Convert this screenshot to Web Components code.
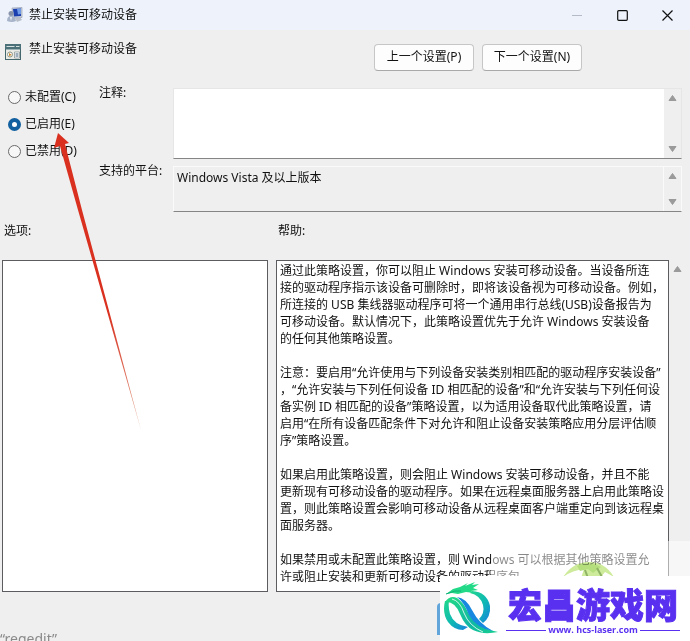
<!DOCTYPE html>
<html lang="zh-CN">
<head>
<meta charset="utf-8">
<title>禁止安装可移动设备</title>
<style>
  body {
    margin: 0;
    font-family: "Noto Sans", "Noto Sans CJK SC", sans-serif;
    font-size: 12px;
    line-height: 17px;
    color: #111;
    background: #efefef;
  }
</style>
</head>
<body>
<policy-window></policy-window>

<script>
class TitleBar extends HTMLElement {
  constructor() {
    super();
    this.attachShadow({ mode: 'open' });
    this.shadowRoot.innerHTML = `
      <style>
        :host {
          display: flex;
          align-items: center;
          flex: none;
          height: 30px;
          padding-left: 7px;
          background: #edf2fb;
        }

        .icon {
          width: 16px;
          height: 16px;
          margin-right: 6px;
        }

        .title {
          flex: 1;
          padding-bottom: 2px;
        }

        button {
          display: flex;
          align-items: center;
          justify-content: center;
          width: 45px;
          height: 28px;
          padding: 0;
          border: 0;
          background: none;
        }
      </style>
      <svg class="icon" viewBox="0 0 16 16">
        <path d="M5 1l10-.5v10L6 11z" fill="#c9cfdb" stroke="#8d97ad" stroke-width=".6"/>
        <path d="M6 2l8-.5V9L7 9.500z" fill="#1b3fae"/>
        <path d="M10 2l4-.5V7l-3 .5z" fill="#6f9ae8"/>
        <path d="M8 11l5-1 2 3-5 2z" fill="#b9bfca"/>
        <circle cx="4" cy="6.500" r="2.500" fill="#8792a8"/>
        <path d="M0 14q0-5 4-5t5 5q-4 2-9 0z" fill="#a7b3c8"/>
        <path d="M3 10l2 0-1 4z" fill="#eef2f8"/>
      </svg>
      <span class="title"><slot></slot></span>
      <button aria-label="最小化" disabled>
        <svg width="11" height="11"><path d="M0 5.500h10" stroke="#b4bac6"/></svg>
      </button>
      <button aria-label="最大化">
        <svg width="11" height="11"><rect x=".7" y=".7" width="9.600" height="9.600" rx="1" fill="none" stroke="#111" stroke-width="1.200"/></svg>
      </button>
      <button aria-label="关闭">
        <svg width="11" height="11"><path d="M.5.5l10 10M10.500.5l-10 10" stroke="#111" stroke-width="1.200"/></svg>
      </button>
    `;
  }
}

customElements.define('title-bar', TitleBar);

class SettingHeader extends HTMLElement {
  constructor() {
    super();
    this.attachShadow({ mode: 'open' });
    this.shadowRoot.innerHTML = `
      <style>
        :host {
          display: flex;
          align-items: flex-start;
          flex: none;
          box-sizing: border-box;
          height: 43px;
          padding: 14px 5px 0;
        }

        svg {
          flex: none;
          width: 16px;
          height: 16px;
          margin-right: 8px;
        }

        .name {
          flex: 1;
          margin-top: -4px;
        }

        nav {
          display: flex;
          flex: 0 0 311px;
          gap: 8px;
        }
      </style>
      <svg viewBox="0 0 16 16">
        <rect x=".5" y=".5" width="15" height="15" fill="#e9ebe4" stroke="#44676d"/>
        <path d="M0 0h16v5H0z" fill="#4c7077"/>
        <path d="M1.500 2.500h8M11 2.500h3.500" stroke="#d5e0df"/>
        <path d="M1 5.500h14" stroke="#9eb3b5"/>
        <circle cx="5" cy="10.500" r="2.500" fill="#fff" stroke="#8a9385"/>
        <path d="M4 9l3 2-3 1z" fill="#c8862f"/>
        <path d="M9.500 8h5v6h-5z" fill="#fff" stroke="#7f8c8c" stroke-width=".7"/>
        <path d="M10.500 10h3M10.500 12h3" stroke="#3b5d75"/>
      </svg>
      <span class="name"><slot></slot></span>
      <nav>
        <push-button>上一个设置(P)</push-button>
        <push-button>下一个设置(N)</push-button>
      </nav>
    `;
  }
}

customElements.define('setting-header', SettingHeader);

class PushButton extends HTMLElement {
  constructor() {
    super();
    this.attachShadow({ mode: 'open' });
    this.shadowRoot.innerHTML = `
      <style>
        :host {
          display: block;
        }

        button {
          width: 100px;
          height: 27px;
          padding: 0 0 2px;
          border: 1px solid #c6c6c6;
          border-bottom-color: #a9a9a9;
          border-radius: 4px;
          background: #fdfdfd;
          color: inherit;
          font: inherit;
          white-space: nowrap;
        }
      </style>
      <button><slot></slot></button>
    `;
  }
}

customElements.define('push-button', PushButton);

class StateOptions extends HTMLElement {
  constructor() {
    super();
    this.attachShadow({ mode: 'open' });
    this.shadowRoot.innerHTML = `
      <style>
        :host {
          display: block;
        }

        label {
          display: flex;
          align-items: center;
          gap: 4px;
          height: 27px;
        }

        input {
          appearance: none;
          box-sizing: border-box;
          width: 13px;
          height: 13px;
          margin: 1px 0 0;
          border: 1px solid #6a6a6a;
          border-radius: 50%;
          background: #f7f7f7;
        }

        input:checked {
          border: 4px solid #12609f;
          background: #fff;
        }
      </style>
    `;
  }

  connectedCallback() {
    const states = JSON.parse(this.getAttribute('states'));
    states.forEach(state => {
      const label = document.createElement('label');
      const input = document.createElement('input');
      input.type = 'radio';
      input.name = 'state';
      input.checked = state === this.getAttribute('selected');
      label.append(input, state);
      this.shadowRoot.appendChild(label);
    });
  }
}

customElements.define('state-options', StateOptions);

class ScrollArrows extends HTMLElement {
  constructor() {
    super();
    this.attachShadow({ mode: 'open' });
    this.shadowRoot.innerHTML = `
      <style>
        :host {
          display: flex;
          flex-direction: column;
          justify-content: space-between;
          flex: 0 0 17px;
          background: #efefef;
        }

        button {
          display: flex;
          align-items: center;
          justify-content: center;
          height: 18px;
          padding: 0;
          border: 0;
          background: none;
        }

        path {
          fill: #9a9a9a;
          stroke: #9a9a9a;
          stroke-linejoin: round;
        }
      </style>
      <button aria-label="向上滚动"><svg width="9" height="8"><path d="M4.500 1.500L8 6.500H1z"/></svg></button>
      <button aria-label="向下滚动"><svg width="9" height="8"><path d="M4.500 6.500L8 1.500H1z"/></svg></button>
    `;
  }
}

customElements.define('scroll-arrows', ScrollArrows);

class TextField extends HTMLElement {
  constructor() {
    super();
    this.attachShadow({ mode: 'open' });
    this.shadowRoot.innerHTML = `
      <style>
        :host {
          display: flex;
        }

        label {
          flex: 0 0 74px;
          margin-top: -4px;
          white-space: nowrap;
        }

        .box {
          display: flex;
          flex: 1;
          box-sizing: border-box;
          border: 1px solid #e6e6e6;
          border-bottom-color: #858585;
          background: #fff;
        }

        textarea {
          flex: 1;
          min-width: 0;
          padding: 2px 3px;
          border: 0;
          outline: 0;
          resize: none;
          overflow: hidden;
          background: none;
          color: inherit;
          font: inherit;
        }

        :host([readonly]) .box {
          border-color: #fafafa #fafafa #858585;
          background: #efefef;
        }

        :host([readonly]) scroll-arrows {
          border-left: 1px solid #fafafa;
        }
      </style>
      <label for="text"></label>
      <div class="box">
        <textarea id="text" rows="1"></textarea>
        <scroll-arrows></scroll-arrows>
      </div>
    `;
  }

  connectedCallback() {
    const text = this.shadowRoot.querySelector('textarea');
    this.shadowRoot.querySelector('label').textContent = this.getAttribute('label');
    text.value = this.getAttribute('value') || '';
    text.readOnly = this.hasAttribute('readonly');
  }
}

customElements.define('text-field', TextField);

class PaneBox extends HTMLElement {
  constructor() {
    super();
    this.attachShadow({ mode: 'open' });
    this.shadowRoot.innerHTML = `
      <style>
        :host {
          display: flex;
          flex-direction: column;
          min-width: 0;
          min-height: 0;
        }

        .caption {
          height: 38px;
          padding-left: 2px;
        }

        .content {
          flex: 1;
          box-sizing: border-box;
          min-height: 0;
          padding: 1px 3px 0;
          overflow: hidden;
          border: 1px solid #5c5c60;
          background: #fff;
          white-space: nowrap;
        }
      </style>
      <div class="caption"><slot name="caption"></slot></div>
      <div class="content"><slot></slot></div>
    `;
  }
}

customElements.define('pane-box', PaneBox);

class RedArrow extends HTMLElement {
  constructor() {
    super();
    this.attachShadow({ mode: 'open' });
    this.shadowRoot.innerHTML = `
      <style>
        :host {
          position: absolute;
          left: 50px;
          top: 130px;
          pointer-events: none;
        }

        svg {
          display: block;
        }
      </style>
      <svg width="96" height="306">
        <defs>
          <linearGradient id="fade" x1="0" y1="0" x2="0" y2="1">
            <stop offset=".6" stop-color="#d9301f"/>
            <stop offset="1" stop-color="#e2a48c"/>
          </linearGradient>
        </defs>
        <path d="M8 3L19 13 15 14 32 80 91 300 28 80 10 16 4 18z" fill="url(#fade)"/>
      </svg>
    `;
  }
}

customElements.define('red-arrow', RedArrow);

class SiteBadge extends HTMLElement {
  constructor() {
    super();
    this.attachShadow({ mode: 'open' });
    this.shadowRoot.innerHTML = `
      <style>
        :host {
          position: absolute;
          right: 0;
          bottom: 0;
          width: 253px;
          height: 100px;
          pointer-events: none;
        }

        .haze {
          position: absolute;
          right: 0;
          bottom: 0;
          width: 199px;
          height: 100px;
          background: rgba(255, 255, 255, .5);
        }

        .leaf {
          position: absolute;
          left: 124px;
          top: 18px;
          mix-blend-mode: multiply;
        }

        .edge {
          position: absolute;
          left: 0;
          bottom: 6px;
          width: 8px;
          height: 32px;
          border-radius: 4px 0 0 0;
          background: #62a5da;
        }

        .card {
          position: absolute;
          right: 0;
          bottom: 0;
          display: flex;
          gap: 7px;
          box-sizing: border-box;
          width: 250px;
          height: 65px;
          padding: 5px 10px 0 3px;
          background: #fff;
          color: #5a30f0;
        }

        .text {
          flex: 1;
          padding-top: 6px;
        }

        .name {
          font: 900 34px/38px Roboto, "Noto Sans CJK SC", sans-serif;
          text-align: center;
          white-space: nowrap;
          -webkit-text-stroke: 1px #5a30f0;
        }

        .site {
          display: flex;
          align-items: center;
          gap: 2px;
          font: 700 9px/10px "Open Sans", sans-serif;
          white-space: nowrap;
        }

        .site::before,
        .site::after {
          content: "";
          flex: 1;
          height: 1px;
          background: #5a30f0;
        }
      </style>
      <div class="haze"></div>
      <svg class="leaf" width="56" height="20">
        <path d="M2 18Q12 3 28 3q16 0 25 15l-9-5-5 6H20l3-9q-11 1-21 8z" fill="#cdeb9b"/>
        <path d="M16 7q10-6 24 1l-8 6-5-4-8 2z" fill="#b5de7d"/>
        <path d="M24 11l3 8M36 9l5 9" stroke="#8fb364" stroke-width="2"/>
      </svg>
      <div class="edge"></div>
      <div class="card">
        <svg width="56" height="54" viewBox="0 0 56 54">
          <defs>
            <linearGradient id="ring" x1="0" y1="0" x2="1" y2="1">
              <stop offset="0" stop-color="#20d68c"/>
              <stop offset=".55" stop-color="#0fb7b5"/>
              <stop offset="1" stop-color="#167fe0"/>
            </linearGradient>
            <linearGradient id="tail" x1="0" y1="0" x2="1" y2="1">
              <stop offset="0" stop-color="#25dc84"/>
              <stop offset=".6" stop-color="#10b7a5"/>
              <stop offset="1" stop-color="#16cf8e"/>
            </linearGradient>
          </defs>
          <!-- dragon head and mane -->
          <path d="M3 13L10 8 17 6 25 2 22 5 32 1 29 4 36 3 30 7 35 9 28 10 31 12 23 11 15 13 9 12z" fill="#22d987"/>
          <path d="M3 13l9-3 6 0" fill="none" stroke="#0fae77" stroke-width="1"/>
          <!-- ring -->
          <path d="M29 10Q44 11 47 25 48 36 40 42L36 38Q42 32 40 24 37 14 27 12z" fill="url(#ring)"/>
          <path d="M2 20Q-1 32 5 41 11 49 20 49L25 46Q11 44 7 33 5 26 6 20z" fill="url(#ring)"/>
          <!-- ribbon -->
          <path d="M2 21Q7 14 14 17 20 21 25 31 33 47 55 51 40 54 30 49 22 45 17 33 12 20 2 21z" fill="url(#tail)"/>
          <path d="M14 16Q23 17 29 29 36 43 50 50 33 47 26 34 21 21 14 16z" fill="#1788df"/>
          <path d="M9 18Q17 20 21 32 26 45 40 51" fill="none" stroke="#fff" stroke-width=".8"/>
        </svg>
        <div class="text">
          <div class="name">宏昌游戏网</div>
          <div class="site">www. hcs-laser.com</div>
        </div>
      </div>
    `;
  }
}

customElements.define('site-badge', SiteBadge);

class PolicyWindow extends HTMLElement {
  constructor() {
    super();
    this.attachShadow({ mode: 'open' });
    this.shadowRoot.innerHTML = `
      <style>
        :host {
          position: relative;
          display: flex;
          flex-direction: column;
          height: 100vh;
          overflow: hidden;
        }

        .settings {
          display: grid;
          grid-template-columns: 91px 1fr;
          flex: none;
          padding: 15px 8px 0;
        }

        state-options {
          margin-top: -5px;
        }

        .fields {
          display: grid;
          grid-template-rows: 71px 46px;
          gap: 7px;
        }

        .panes {
          display: grid;
          grid-template-columns: 266fr 393fr 9px;
          grid-template-rows: minmax(0, 1fr);
          column-gap: 8px;
          flex: 1;
          min-height: 0;
          padding: 10px 4px 0 2px;
        }

        .gutter {
          margin: 38px 0 0 -8px;
        }

        .gutter scroll-arrows {
          height: 100%;
        }

        p {
          margin: 0 0 17px;
        }

        footer {
          flex: none;
          box-sizing: border-box;
          height: 49px;
          padding-top: 38px;
          overflow: hidden;
          color: #8a8a8a;
          font-size: 14px;
        }
      </style>
      <title-bar>禁止安装可移动设备</title-bar>
      <setting-header>禁止安装可移动设备</setting-header>
      <div class="settings">
        <state-options states='["未配置(C)", "已启用(E)", "已禁用(D)"]' selected="已启用(E)"></state-options>
        <div class="fields">
          <text-field label="注释:"></text-field>
          <text-field label="支持的平台:" value="Windows Vista 及以上版本" readonly></text-field>
        </div>
      </div>
      <div class="panes">
        <pane-box><span slot="caption">选项:</span></pane-box>
        <pane-box>
          <span slot="caption">帮助:</span>
          <p>通过此策略设置，你可以阻止 Windows 安装可移动设备。当设备所连<br>接的驱动程序指示该设备可删除时，即将该设备视为可移动设备。例如，<br>所连接的 USB 集线器驱动程序可将一个通用串行总线(USB)设备报告为<br>可移动设备。默认情况下，此策略设置优先于允许 Windows 安装设备<br>的任何其他策略设置。</p>
          <p>注意：要启用“允许使用与下列设备安装类别相匹配的驱动程序安装设备”<br>，“允许安装与下列任何设备 ID 相匹配的设备”和“允许安装与下列任何设<br>备实例 ID 相匹配的设备”策略设置，以为适用设备取代此策略设置，请<br>启用“在所有设备匹配条件下对允许和阻止设备安装策略应用分层评估顺<br>序”策略设置。</p>
          <p>如果启用此策略设置，则会阻止 Windows 安装可移动设备，并且不能<br>更新现有可移动设备的驱动程序。如果在远程桌面服务器上启用此策略设<br>置，则此策略设置会影响可移动设备从远程桌面客户端重定向到该远程桌<br>面服务器。</p>
          <p>如果禁用或未配置此策略设置，则 Windows 可以根据其他策略设置允<br>许或阻止安装和更新可移动设备的驱动程序包。</p>
        </pane-box>
        <div class="gutter"><scroll-arrows></scroll-arrows></div>
      </div>
      <footer>“regedit”</footer>
      <red-arrow></red-arrow>
      <site-badge></site-badge>
    `;
  }
}

customElements.define('policy-window', PolicyWindow);
</script>
</body>
</html>
